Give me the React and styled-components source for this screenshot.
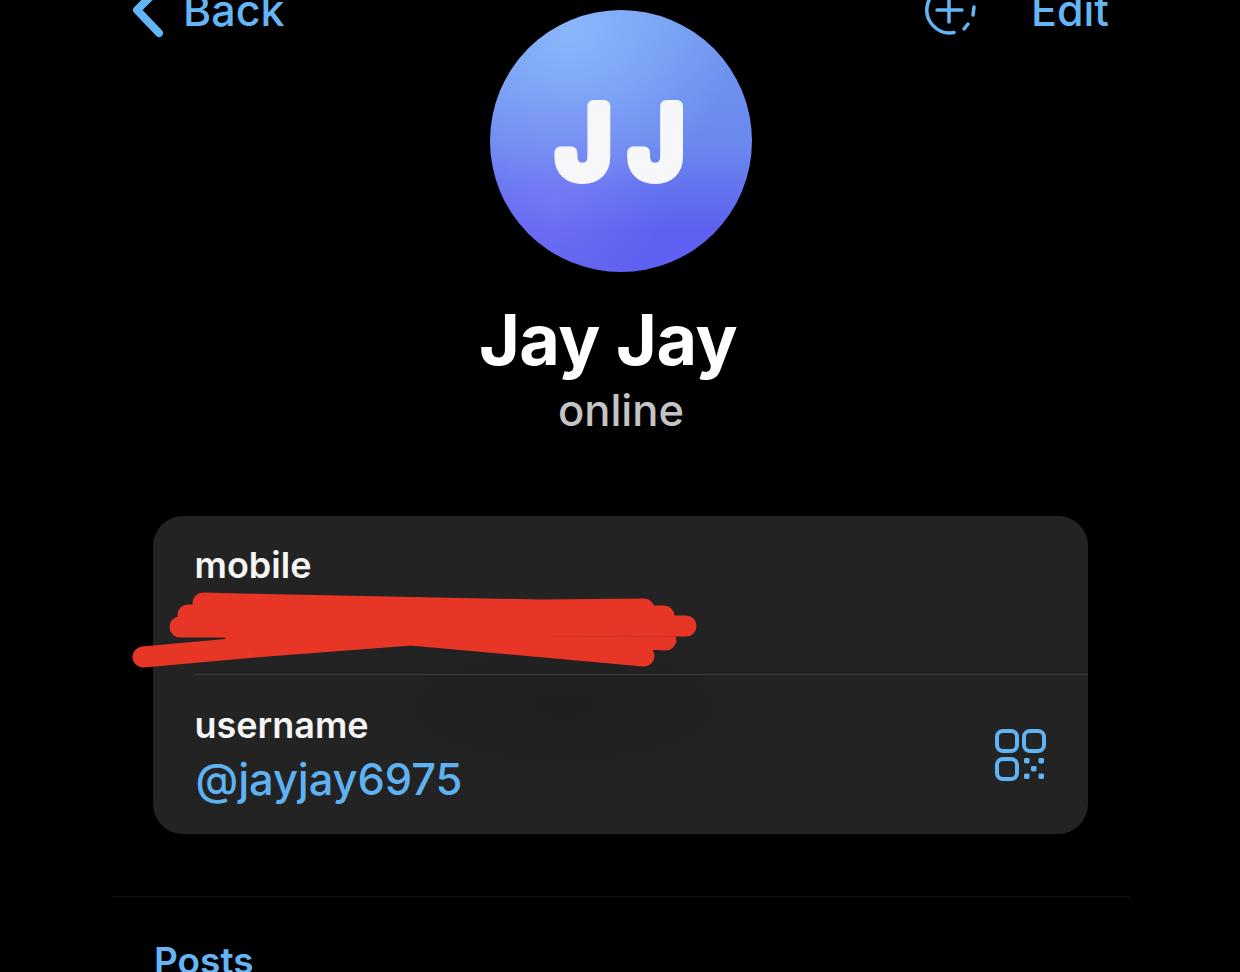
import React from 'react';
import styled, { createGlobalStyle } from 'styled-components';

const GlobalStyle = createGlobalStyle`
  html, body {
    margin: 0;
    padding: 0;
    background: #000;
    font-family: Inter, "Liberation Sans", sans-serif;
  }
`;

const Page = styled.div`
  width: 1240px;
  height: 972px;
  overflow: hidden;
  background: #000;
  display: flex;
  flex-direction: column;
  align-items: center;
`;

const TopRow = styled.header`
  width: 100%;
  box-sizing: border-box;
  padding: 10px 130px 0 132px;
  display: grid;
  grid-template-columns: 1fr auto 1fr;
  align-items: start;
`;

const NavSide = styled.div`
  display: flex;
  align-items: center;
  justify-content: ${(p) => (p.$end ? 'flex-end' : 'flex-start')};
  gap: ${(p) => p.$gap}px;
  height: 40px;
  margin: -20px ${(p) => (p.$end ? '1px' : '0')} 0 ${(p) => (p.$end ? '0' : '-1px')};
  color: #64b5f6;
`;

const NavText = styled.span`
  font-size: 43px;
  line-height: 40px;
  font-weight: 500;
`;

const Avatar = styled.div`
  width: 262px;
  height: 262px;
  border-radius: 50%;
  background:
    radial-gradient(circle at 25% 72%, rgba(132, 128, 248, 0.5) 0%, rgba(132, 128, 248, 0) 42%),
    radial-gradient(circle at 30% 6%, #8bb6fb 0%, rgba(139, 182, 251, 0) 55%),
    linear-gradient(180deg, #7199ef 0%, #6a88ee 52%, #5d60f0 84%);
`;

const Initials = styled.text`
  fill: #f7f7fa;
  stroke: #f7f7fa;
  stroke-width: 12px;
  stroke-linejoin: round;
  font-size: 97px;
  font-weight: 500;
  letter-spacing: 17px;
  text-anchor: middle;
`;

const Name = styled.h1`
  margin: 26px 24px 0 0;
  color: #fff;
  font-size: 70px;
  line-height: 84px;
  font-weight: 700;
  letter-spacing: -0.5px;
`;

const Status = styled.div`
  margin: 3px 0 0 2px;
  color: #c4c4c4;
  font-size: 43.5px;
  line-height: 50px;
  font-weight: 500;
`;

const Card = styled.section`
  position: relative;
  width: 935px;
  height: 318px;
  margin-top: 81px;
  border-radius: 30px;
  background: radial-gradient(ellipse at 44% 60%, #1f1f1f 0%, #232323 32%, #232323 100%);
  flex-shrink: 0;
`;

const Row = styled.div`
  height: ${(p) => p.$height}px;
  box-sizing: border-box;
  margin-left: 42px;
  padding: ${(p) => (p.$divided ? 29 : 28)}px 42px 0 0;
  display: flex;
  justify-content: space-between;
  align-items: flex-start;
  border-top: ${(p) => (p.$divided ? '1px solid #3c3c3c' : 'none')};
`;

const Label = styled.div`
  color: #f5f5f5;
  font-size: 36px;
  line-height: 42px;
  font-weight: 600;
`;

const Handle = styled.div`
  margin: 7px 0 0 1px;
  color: #5fb2f2;
  font-size: 43.5px;
  line-height: 52px;
  font-weight: 500;
  letter-spacing: -0.1px;
`;

const Scribble = styled.svg`
  position: absolute;
  left: -23px;
  top: 74px;
`;

const QrIcon = styled.svg`
  margin: 25px -1px 0 0;
  flex-shrink: 0;
`;

const Rule = styled.div`
  width: 1018px;
  height: 1px;
  margin: 62px 0 0 2px;
  background: #141414;
  flex-shrink: 0;
`;

const SectionTitle = styled.div`
  align-self: flex-start;
  margin: 39px 0 0 154px;
  color: #64b5f6;
  font-size: 37px;
  line-height: 50px;
  font-weight: 600;
`;

const BackChevron = () => (
  <svg width="34" height="48" viewBox="0 0 34 48" fill="none" style={{ overflow: 'visible' }}>
    <path d="M19 11 L6 24 L28 47" stroke="#64b5f6" strokeWidth="8" strokeLinecap="round" strokeLinejoin="round" />
  </svg>
);

const AddStoryIcon = () => (
  <svg width="54" height="50" viewBox="0 0 54 50" fill="none">
    <path d="M40 6 A23 23 0 1 0 31 47.5" stroke="#64b5f6" strokeWidth="3.5" strokeLinecap="round" />
    <path d="M41 44 L45 39 M50 30 L51 22" stroke="#64b5f6" strokeWidth="3.5" strokeLinecap="round" />
    <path d="M14 25 H39 M26 13 V37" stroke="#64b5f6" strokeWidth="3.5" strokeLinecap="round" />
  </svg>
);

const RedactionMark = () => (
  <Scribble width="570" height="80" viewBox="130 590 570 80" fill="none">
    <path
      d="M203 603 L240 604 L540 610 L644 609
         M188 615 L664 616
         M180 627 L686 626
         M143 657 L254 647 L411 635 L644 656
         M400 625 L666 640
         M235 640 L420 630"
      stroke="#e73626"
      strokeWidth="21"
      strokeLinecap="round"
      strokeLinejoin="round"
    />
  </Scribble>
);

const QrCode = () => (
  <QrIcon width="52" height="52" viewBox="0 0 52 52" fill="none">
    <g stroke="#5fb4f5" strokeWidth="4">
      <rect x="2" y="2" width="20" height="20" rx="6" />
      <rect x="29" y="2" width="20" height="20" rx="6" />
      <rect x="2" y="30" width="20" height="20" rx="6" />
    </g>
    <g fill="#5fb4f5">
      <rect x="29" y="29" width="5.5" height="5.5" rx="1.4" />
      <rect x="43.5" y="29" width="5.5" height="5.5" rx="1.4" />
      <rect x="36" y="37" width="5.5" height="5.5" rx="1.4" />
      <rect x="29" y="44.5" width="5.5" height="5.5" rx="1.4" />
      <rect x="43.5" y="44.5" width="5.5" height="5.5" rx="1.4" />
    </g>
  </QrIcon>
);

const App = () => {
  return (
    <Page>
      <GlobalStyle />
      <TopRow>
        <NavSide $gap={18}>
          <BackChevron />
          <NavText>Back</NavText>
        </NavSide>
        <Avatar>
          <svg width="262" height="262" viewBox="0 0 262 262">
            <Initials x="139" y="167">JJ</Initials>
          </svg>
        </Avatar>
        <NavSide $end $gap={54}>
          <AddStoryIcon />
          <NavText>Edit</NavText>
        </NavSide>
      </TopRow>
      <Name>Jay Jay</Name>
      <Status>online</Status>
      <Card>
        <Row $height={158}>
          <Label>mobile</Label>
        </Row>
        <Row $divided $height={160}>
          <div>
            <Label>username</Label>
            <Handle>@jayjay6975</Handle>
          </div>
          <QrCode />
        </Row>
        <RedactionMark />
      </Card>
      <Rule />
      <SectionTitle>Posts</SectionTitle>
    </Page>
  );
};

export default App;
